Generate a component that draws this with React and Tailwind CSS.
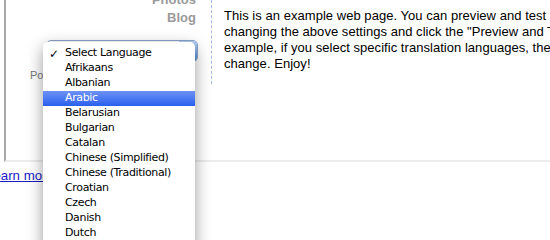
const languages = [
  'Select Language',
  'Afrikaans',
  'Albanian',
  'Arabic',
  'Belarusian',
  'Bulgarian',
  'Catalan',
  'Chinese (Simplified)',
  'Chinese (Traditional)',
  'Croatian',
  'Czech',
  'Danish',
  'Dutch',
  'English',
  'Estonian',
]

export default function App() {
  return (
    <div className="relative h-[240px] w-[550px] overflow-hidden bg-white font-['Liberation_Sans',Arial,sans-serif]">
      {/* page box */}
      <div className="ml-[4px] flex h-[162px] border-b-2 border-l-2 border-b-[#ececec] border-l-[#a8a8a8]">
        {/* sidebar */}
        <div className="h-[84px] w-[206px] shrink-0 border-r border-dashed border-r-[#a3b9e6]">
          <div className="-mt-[9px] pr-[15px] text-right text-[13px] font-bold leading-[18px] text-[#9a9a9a]">
            <div>Photos</div>
            <div>Blog</div>
          </div>
          <div className="ml-[40px] mt-[13px] flex h-[22px] w-[152px] justify-end rounded-[5px] border border-[#8aa4cc] bg-white">
            <div className="w-[18px] rounded-r-[4px] bg-linear-to-b from-[#b8d4f6] to-[#4d8fe6]" />
          </div>
          <div className="ml-[24px] mt-[7px] text-[11px] leading-[13px] text-[#777]">Powered by Translate</div>
        </div>
        {/* content */}
        <div className="pl-[12px] pt-[8px] text-[13px] leading-[16px] tracking-[0.04px] whitespace-nowrap text-black">
          This is an example web page. You can preview and test how the Website Translator works by
          <br />
          changing the above settings and click the "Preview and Test" button. For
          <br />
          example, if you select specific translation languages, the language list in the
          <br />
          change. Enjoy!
        </div>
      </div>
      <a href="#" className="-ml-[14px] mt-[5px] block text-[13.3px] leading-[18px] text-[#1a1ac4] underline">
        Learn more
      </a>

      {/* open language menu */}
      <div className="absolute left-[43px] top-[42px] w-[152px] rounded-t-[5px] bg-white pt-[4px] font-['DejaVu_Sans',sans-serif] text-[11px] tracking-[-0.35px] text-black shadow-[0_5px_16px_rgba(0,0,0,0.4)]">
        {languages.map((lang, i) => (
          <div
            key={lang}
            className={`flex h-[15px] items-center ${
              i === 3 ? 'bg-linear-to-b from-[#6d91f5] to-[#2a5fee] text-white' : ''
            }`}
          >
            <span className="w-[22px] shrink-0 pl-[6px] text-[12px]">{i === 0 ? '✓' : ''}</span>
            <span>{lang}</span>
          </div>
        ))}
      </div>
    </div>
  )
}
